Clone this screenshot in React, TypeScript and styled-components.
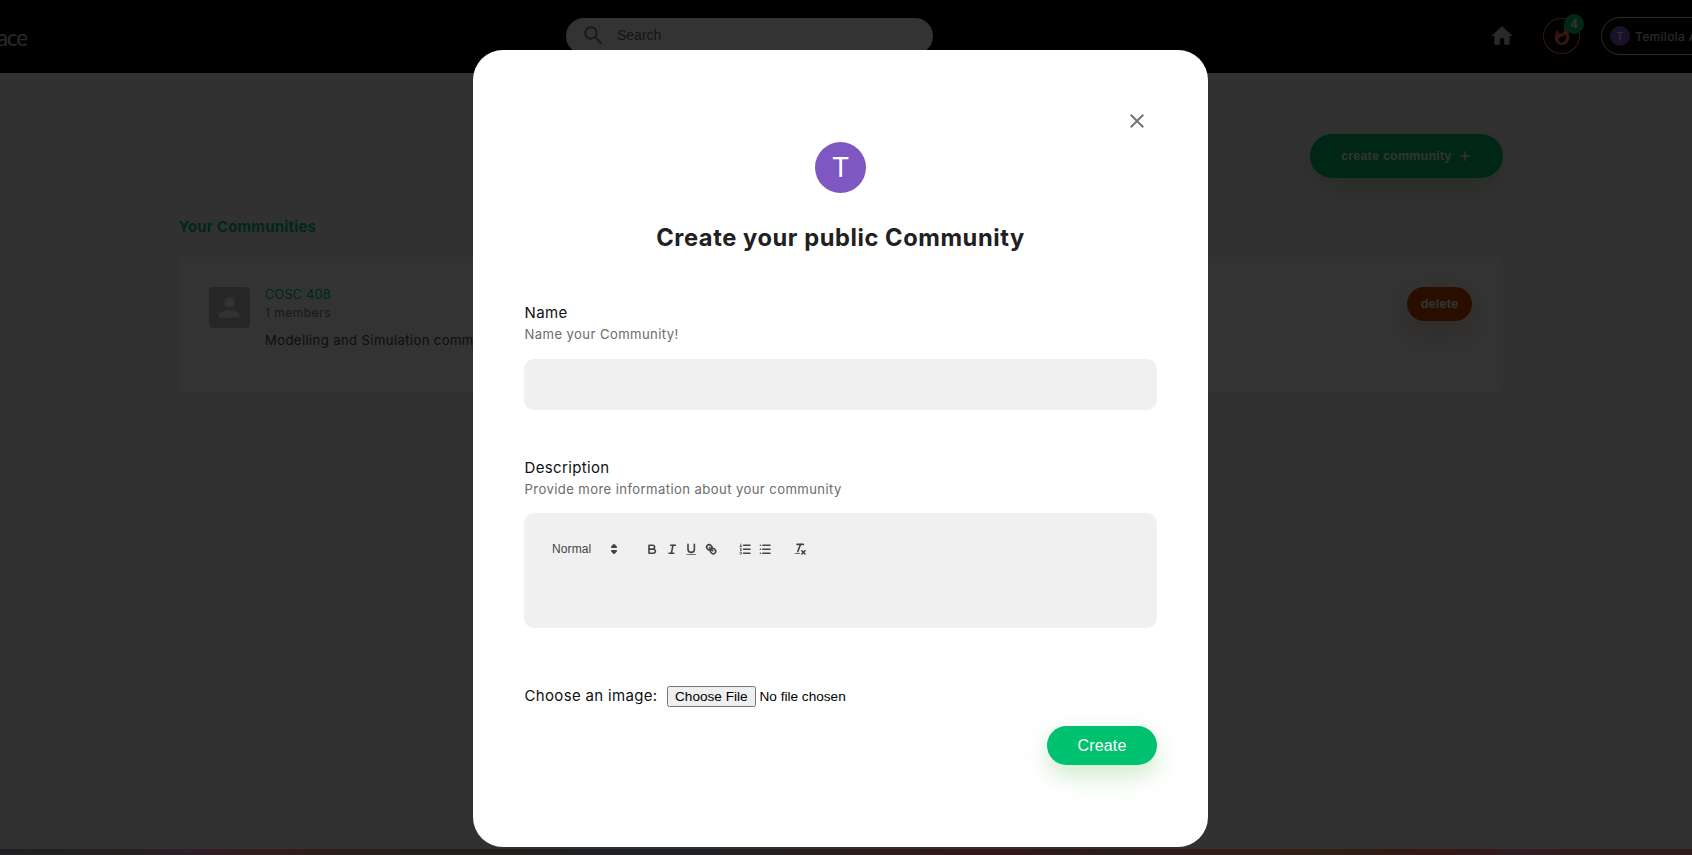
import React from "react";
import styled, { createGlobalStyle } from "styled-components";
import { MdAdd, MdClose, MdHome, MdPerson, MdSearch, MdWhatshot } from "react-icons/md";

const sans = `Inter, "Liberation Sans", sans-serif`;
const arial = `"Liberation Sans", Arial, sans-serif`;
const green = "#00c170";

const GlobalStyle = createGlobalStyle`
  * { box-sizing: border-box; }
  body { margin: 0; overflow: hidden; font-family: ${sans}; background: #f5f5f5; }
  h1, h2, p { margin: 0; }
  svg { display: block; flex: none; }
`;

const Page = styled.div`
  display: flex;
  flex-direction: column;
  height: 855px;
  overflow: hidden;
  background: #f5f5f5;
`;

const Header = styled.header`
  display: flex;
  align-items: center;
  flex: none;
  height: 73px;
  overflow: hidden;
  background: #000;
`;

const Logo = styled.div`
  display: flex;
  justify-content: flex-end;
  flex: none;
  width: 27px;
  margin: 1px 539px 0 0;
  overflow: hidden;
  color: #ccc;
  font: 400 23px/30px Lato, sans-serif;
  letter-spacing: -1.4px;
`;

const SearchBar = styled.div`
  display: flex;
  align-items: center;
  flex: none;
  gap: 11px;
  width: 367px;
  height: 36px;
  margin-right: 556px;
  margin-top: -1px;
  padding: 0 0 2px 15px;
  border-radius: 18px;
  background: #fff;
  color: #666;
  font: 14px/20px ${arial};

  svg { color: #858585; }
`;

const HomeIcon = styled(MdHome)`
  color: #ccc;
  margin: -1px 28px 0 0;
`;

const Streak = styled.div`
  position: relative;
  display: flex;
  align-items: center;
  justify-content: center;
  flex: none;
  width: 37px;
  height: 36px;
  margin: -1px 21px 0 0;
  border: 1px solid #ff7043;
  border-radius: 50%;
  color: #ff7043;
`;

const Badge = styled.span`
  position: absolute;
  top: -5px;
  right: -5px;
  width: 20px;
  height: 20px;
  border-radius: 50%;
  background: ${green};
  color: #fff;
  text-align: center;
  font: 500 12.5px/20px Roboto, sans-serif;
`;

const UserPill = styled.div`
  display: flex;
  align-items: center;
  flex: none;
  gap: 5px;
  width: 190px;
  height: 38px;
  margin-top: -1px;
  padding-left: 8px;
  border: 1px solid #ddd;
  border-radius: 19px;
  color: #ccc;
  font-size: 12px;
  font-weight: 500;
  letter-spacing: 0.3px;
`;

const Avatar = styled.div<{ $size: number; $font: number }>`
  display: flex;
  align-items: center;
  justify-content: center;
  flex: none;
  width: ${(p) => p.$size}px;
  height: ${(p) => p.$size}px;
  border-radius: 50%;
  background: #7e57c2;
  color: #fff;
  font-family: Roboto, sans-serif;
  font-size: ${(p) => p.$font}px;
  font-weight: 400;
  letter-spacing: 0;
`;

const Content = styled.main`
  display: flex;
  flex-direction: column;
  flex: 1;
  width: 1325px;
  margin-left: 178px;
  padding-top: 61px;
`;

const CreateCommunity = styled.button`
  display: flex;
  align-items: center;
  align-self: flex-end;
  gap: 5px;
  width: 193px;
  height: 44px;
  padding: 0 0 0 31px;
  border: 0;
  border-radius: 22px;
  background: ${green};
  box-shadow: 0 10px 30px rgba(60, 130, 60, 0.25);
  color: #fff;
  font: 700 12.4px/16px ${arial};
  letter-spacing: 0.28px;
`;

const SectionTitle = styled.h2`
  margin: 39px 0 20px 0.5px;
  color: ${green};
  font-size: 14.8px;
  font-weight: 700;
  line-height: 20px;
  letter-spacing: 0.29px;
`;

const Card = styled.article`
  display: flex;
  align-items: flex-start;
  height: 135px;
  padding: 30px 31px;
  border-radius: 10px;
  background: #fff;
`;

const CommunityImage = styled.div`
  display: flex;
  align-items: center;
  justify-content: center;
  width: 41px;
  height: 41px;
  margin-right: 15px;
  border-radius: 4px;
  background: #bdbdbd;
  color: #fafafa;
`;

const CommunityInfo = styled.div`
  flex: 1;
  margin-top: -1px;
  color: #484848;
  font-size: 13.1px;
  line-height: 18px;
  letter-spacing: 0.39px;
`;

const CommunityName = styled.p`
  color: ${green};
  font-size: 12.8px;
  letter-spacing: 0.15px;
`;

const Members = styled.p`
  margin-bottom: 9px;
  color: #757575;
  font-size: 12px;
  letter-spacing: 0.5px;
`;

const DeleteButton = styled.button`
  width: 65px;
  height: 34px;
  padding: 0;
  border: 0;
  border-radius: 17px;
  background: #cb4600;
  box-shadow: 0 10px 30px rgba(160, 80, 30, 0.25);
  color: #fff;
  font: 700 12.8px/16px ${arial};
  letter-spacing: 0.1px;
`;

const FooterArt = styled.footer`
  flex: none;
  height: 6px;
  background: linear-gradient(
    90deg,
    #a0a0aa 0, #afa0a0 130px, #e19bd2 185px, #ff8c96 235px, #e19682 320px,
    #aa9b96 420px, #aa9b9b 530px, #a0a5be 640px, #b4a0a5 760px, #e68c8c 890px,
    #ff6e78 960px, #ff7378 1030px, #c8968c 1110px, #f08c82 1160px, #f59b78 1310px,
    #ff7364 1420px, #ff7882 1480px, #eb96be 1510px, #eb8c8c 1580px, #ff828c 1692px
  );
`;

const Overlay = styled.div`
  position: fixed;
  inset: 0;
  padding: 50px 0 0 473px;
  background: rgba(0, 0, 0, 0.8);
`;

const Modal = styled.section`
  display: flex;
  flex-direction: column;
  width: 735px;
  height: 797px;
  padding: 59px 51px 0;
  border-radius: 30px;
  background: #fff;
`;

const CloseButton = styled.button`
  align-self: flex-end;
  height: 24px;
  margin-right: 8.5px;
  padding: 0;
  border: 0;
  background: none;
  color: #757575;
`;

const ModalHead = styled.div`
  display: flex;
  flex-direction: column;
  align-items: center;
  gap: 30px;
  margin-top: 9px;
`;

const Title = styled.h1`
  color: #212121;
  font-size: 23.7px;
  font-weight: 700;
  line-height: 29px;
  letter-spacing: 0.56px;
`;

const Label = styled.label`
  padding-left: 0.5px;
  color: #111;
  font-size: 15px;
  line-height: 22px;
  letter-spacing: 0.35px;
`;

const Field = styled.div<{ $top: number; $gap: number }>`
  display: flex;
  flex-direction: column;
  margin-top: ${(p) => p.$top}px;

  p { margin-bottom: ${(p) => p.$gap}px; }
`;

const Hint = styled.p`
  margin: 1px 0 0;
  padding-left: 0.5px;
  color: #6b6b6b;
  font-size: 13.1px;
  line-height: 19px;
  letter-spacing: 0.41px;
`;

const TextInput = styled.input`
  width: 100%;
  height: 51px;
  padding: 0 20px;
  border: 0;
  border-radius: 10px;
  background: #f0f0f0;
`;

const Editor = styled.div`
  height: 115px;
  padding: 24px 28px;
  border-radius: 10px;
  background: #f0f0f0;
`;

const Toolbar = styled.div`
  display: flex;
  align-items: center;
  gap: 15.4px;
  height: 24px;
`;

const Picker = styled.div`
  display: flex;
  align-items: center;
  justify-content: space-between;
  width: 75.6px;
  padding-right: 5px;
  color: #444;
  font: 500 12px/24px ${arial};
  letter-spacing: 0.1px;
`;

const ToolGroup = styled.div`
  display: flex;
`;

const Tool = styled.button`
  display: flex;
  align-items: center;
  justify-content: center;
  width: 19.4px;
  height: 24px;
  padding: 0;
  border: 0;
  background: none;
`;

const Glyph = styled.svg.attrs({ viewBox: "0 0 18 18" })<{ $size?: number }>`
  width: ${(p) => p.$size ?? 14.4}px;
  height: ${(p) => p.$size ?? 14.4}px;
  fill: none;
  stroke: #444;
  stroke-width: 2;
  stroke-linecap: round;
  stroke-linejoin: round;

  .fill { fill: #444; stroke: none; }
  .both { fill: #444; }
  .thin { stroke-width: 1; }
`;

const FileRow = styled.div`
  display: flex;
  align-items: center;
  height: 22px;
  margin: 57px 0 19px;

  ${Label} { width: 143px; letter-spacing: 0.33px; }
`;

const FileInput = styled.input`
  font: 13.6px ${arial};
  color: #000;

  &::file-selector-button {
    height: 21px;
    padding: 0 6px;
    font: 13.6px ${arial};
  }
`;

const SubmitButton = styled.button`
  align-self: flex-end;
  width: 110px;
  height: 39px;
  padding: 0;
  border: 0;
  border-radius: 20px;
  background: ${green};
  box-shadow: 0 10px 25px rgba(76, 180, 70, 0.28);
  color: #fff;
  font: 16px/20px ${arial};
  letter-spacing: 0.2px;
`;

const PickerArrows = () => (
  <Glyph $size={18}>
    <polygon className="both" points="7 11 9 13 11 11 7 11" />
    <polygon className="both" points="7 7 9 5 11 7 7 7" />
  </Glyph>
);

const BoldGlyph = () => (
  <Glyph>
    <path d="M5,4H9.5A2.5,2.5,0,0,1,12,6.5v0A2.5,2.5,0,0,1,9.5,9H5Z" />
    <path d="M5,9h5.5A2.5,2.5,0,0,1,13,11.5v0A2.5,2.5,0,0,1,10.5,14H5Z" />
  </Glyph>
);

const ItalicGlyph = () => (
  <Glyph>
    <line x1="7" x2="13" y1="4" y2="4" />
    <line x1="5" x2="11" y1="14" y2="14" />
    <line x1="8" x2="10" y1="14" y2="4" />
  </Glyph>
);

const UnderlineGlyph = () => (
  <Glyph>
    <path d="M5,3V9a4.012,4.012,0,0,0,4,4H9a4.012,4.012,0,0,0,4-4V3" />
    <rect className="fill" height="1" rx=".5" width="12" x="3" y="15" />
  </Glyph>
);

const LinkGlyph = () => (
  <Glyph>
    <line x1="7" x2="11" y1="7" y2="11" />
    <path d="M8.9,4.577a3.476,3.476,0,0,1,.36,4.679A3.476,3.476,0,0,1,4.577,8.9C3.185,7.5,2.035,6.4,4.217,4.217S7.5,3.185,8.9,4.577Z" />
    <path d="M13.423,9.1a3.476,3.476,0,0,0-4.679-.36,3.476,3.476,0,0,0,.36,4.679c1.392,1.392,2.5,2.542,4.679.36S14.815,10.5,13.423,9.1Z" />
  </Glyph>
);

const OrderedGlyph = () => (
  <Glyph>
    <line x1="7" x2="15" y1="4" y2="4" />
    <line x1="7" x2="15" y1="9" y2="9" />
    <line x1="7" x2="15" y1="14" y2="14" />
    <line className="thin" x1="2.5" x2="4.5" y1="5.5" y2="5.5" />
    <line className="thin" x1="3.5" x2="3.5" y1="2.5" y2="5.5" />
    <path className="thin" d="M4.5,10.5h-2c0-.234,1.85-1.076,1.85-2.234A0.959,0.959,0,0,0,2.5,8.156" />
    <path className="thin" d="M2.5,14.846a0.959,0.959,0,0,0,1.85-.109A0.7,0.7,0,0,0,3.75,14a0.688,0.688,0,0,0,.6-0.736,0.959,0.959,0,0,0-1.85-.109" />
  </Glyph>
);

const BulletGlyph = () => (
  <Glyph>
    {[4, 9, 14].map((y) => (
      <React.Fragment key={y}>
        <line x1="6" x2="15" y1={y} y2={y} />
        <line x1="3" x2="3" y1={y} y2={y} />
      </React.Fragment>
    ))}
  </Glyph>
);

const CleanGlyph = () => (
  <Glyph>
    <line x1="5" x2="13" y1="3" y2="3" />
    <line x1="6" x2="9.35" y1="12" y2="3" />
    <line x1="11" x2="15" y1="11" y2="15" />
    <line x1="15" x2="11" y1="11" y2="15" />
    <rect className="fill" height="1" rx="0.5" width="7" x="2" y="14" />
  </Glyph>
);

export default function App() {
  return (
    <>
      <GlobalStyle />
      <Page>
        <Header>
          <Logo>ace</Logo>
          <SearchBar>
            <MdSearch size={25} />
            Search
          </SearchBar>
          <HomeIcon size={26} />
          <Streak>
            <MdWhatshot size={22} />
            <Badge>4</Badge>
          </Streak>
          <UserPill>
            <Avatar $size={20} $font={11}>T</Avatar>
            <span>Temilola&nbsp;A</span>
          </UserPill>
        </Header>
        <Content>
          <CreateCommunity>
            create community
            <MdAdd size={16} />
          </CreateCommunity>
          <SectionTitle>Your Communities</SectionTitle>
          <Card>
            <CommunityImage>
              <MdPerson size={31} />
            </CommunityImage>
            <CommunityInfo>
              <CommunityName>COSC 408</CommunityName>
              <Members>1 members</Members>
              <p>Modelling and Simulation comm</p>
            </CommunityInfo>
            <DeleteButton>delete</DeleteButton>
          </Card>
        </Content>
        <FooterArt />
      </Page>
      <Overlay>
        <Modal role="dialog">
          <CloseButton aria-label="Close">
            <MdClose size={24} />
          </CloseButton>
          <ModalHead>
            <Avatar $size={51} $font={28}>T</Avatar>
            <Title>Create your public Community</Title>
          </ModalHead>
          <Field $top={50} $gap={15}>
            <Label>Name</Label>
            <Hint>Name your Community!</Hint>
            <TextInput />
          </Field>
          <Field $top={47} $gap={14}>
            <Label>Description</Label>
            <Hint>Provide more information about your community</Hint>
            <Editor>
              <Toolbar>
                <Picker>
                  Normal
                  <PickerArrows />
                </Picker>
                <ToolGroup>
                  <Tool><BoldGlyph /></Tool>
                  <Tool><ItalicGlyph /></Tool>
                  <Tool><UnderlineGlyph /></Tool>
                  <Tool><LinkGlyph /></Tool>
                </ToolGroup>
                <ToolGroup>
                  <Tool><OrderedGlyph /></Tool>
                  <Tool><BulletGlyph /></Tool>
                </ToolGroup>
                <ToolGroup>
                  <Tool><CleanGlyph /></Tool>
                </ToolGroup>
              </Toolbar>
            </Editor>
          </Field>
          <FileRow>
            <Label>Choose an image:</Label>
            <FileInput type="file" />
          </FileRow>
          <SubmitButton>Create</SubmitButton>
        </Modal>
      </Overlay>
    </>
  );
}
